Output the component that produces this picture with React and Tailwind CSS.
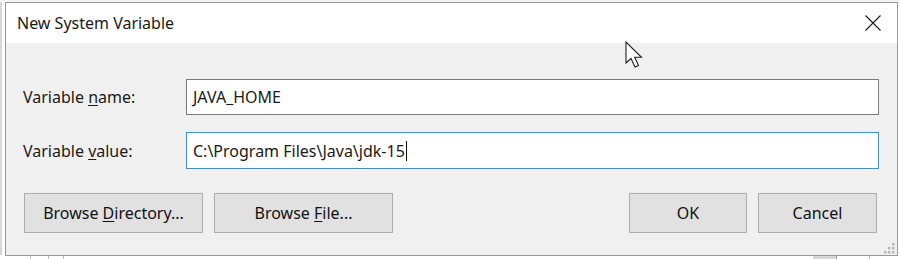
import React from "react";

function CloseX() {
  return (
    <svg width="16" height="16" viewBox="0 0 16 16" className="block">
      <path d="M0.5 0.5 L15.5 15.5 M15.5 0.5 L0.5 15.5" stroke="#1a1a1a" strokeWidth="1.1" fill="none" />
    </svg>
  );
}

function Cursor() {
  return (
    <svg width="20" height="28" viewBox="0 0 20 28" className="block">
      <path
        d="M1 1 L1 22 L6 17.5 L10 26 L13.5 24.5 L9.7 16.3 L16.5 16.3 Z"
        fill="#ffffff"
        stroke="#222"
        strokeWidth="1.1"
        strokeLinejoin="miter"
      />
    </svg>
  );
}

function Grip() {
  const dots = [
    [8, 0],
    [4, 4],
    [8, 4],
    [0, 8],
    [4, 8],
    [8, 8],
  ];
  return (
    <svg width="11" height="11" viewBox="0 0 11 11" className="block">
      {dots.map(([x, y], i) => (
        <rect key={i} x={x} y={y} width="2.5" height="2.5" fill="#b8b8b8" />
      ))}
    </svg>
  );
}

function Btn({ children, w }) {
  return (
    <div
      className={`${w} h-[40px] flex items-center justify-center bg-[#e1e1e1] border border-[#adadad] text-[#111] text-[16px]`}
    >
      {children}
    </div>
  );
}

export default function App() {
  return (
    <div
      className="w-[900px] h-[259px] bg-white relative overflow-hidden"
      style={{ fontFamily: '"Noto Sans", "Open Sans", sans-serif' }}
    >
      <div className="h-[2px] bg-[#f4f4f4]" />
      <div className="flex">
        <div className="w-[5px] relative">
          <div className="absolute left-[0px] top-[0px] w-[2px] h-[253px] bg-[#d8d8d8]" />
        </div>
        <div className="w-[893px] h-[254px] border border-[#9a9a9a] flex flex-col">
          <div className="h-[40px] bg-white flex items-center justify-between pl-[11px] pr-[16px]">
            <span className="text-[16px] text-[#1a1a1a] leading-none">New System Variable</span>
            <CloseX />
          </div>
          <div className="flex-1 bg-[#f0f0f0] flex flex-col pt-[36px] relative">
            <div className="flex items-center h-[36px]">
              <div className="w-[180px] pl-[17px] text-[16px] text-[#1a1a1a]">
                Variable <u className="underline-offset-2">n</u>ame:
              </div>
              <div className="w-[693px] h-[36px] border border-[#7a7a7a] bg-white flex items-center pl-[6px] text-[16px] text-[#1a1a1a]">
                JAVA_HOME
              </div>
            </div>
            <div className="flex items-center h-[37px] mt-[17px]">
              <div className="w-[180px] pl-[17px] text-[16px] text-[#1a1a1a]">
                Variable <u className="underline-offset-2">v</u>alue:
              </div>
              <div className="w-[693px] h-[37px] border border-[#4a8fc4] bg-white flex items-center pl-[6px] text-[16px] text-[#1a1a1a]">
                <span>C:\Program Files\Java\jdk-15</span>
                <span className="w-[1px] h-[20px] bg-[#111] ml-[1px]" />
              </div>
            </div>
            <div className="flex mt-[24px] pl-[18px] pr-[20px]">
              <Btn w="w-[179px]">
                <span>
                  Browse <u className="underline-offset-2">D</u>irectory...
                </span>
              </Btn>
              <div className="w-[11px]" />
              <Btn w="w-[179px]">
                <span>
                  Browse <u className="underline-offset-2">F</u>ile...
                </span>
              </Btn>
              <div className="flex-1" />
              <Btn w="w-[118px]">OK</Btn>
              <div className="w-[11px]" />
              <Btn w="w-[119px]">Cancel</Btn>
            </div>
            <div className="absolute right-[2px] bottom-[1px]">
              <Grip />
            </div>
          </div>
        </div>
      </div>
      <div className="flex h-[3px]">
        <div className="w-[30px]" />
        <div className="w-[1px] bg-[#bdbdbd]" />
        <div className="w-[17px]" />
        <div className="w-[1px] bg-[#bdbdbd]" />
        <div className="w-[14px]" />
        <div className="w-[1px] bg-[#bdbdbd]" />
        <div className="w-[749px]" />
        <div className="w-[23px] bg-[#d6d6d6]" />
        <div className="w-[1px] bg-[#9a9a9a]" />
        <div className="w-[32px]" />
        <div className="w-[1px] bg-[#bdbdbd]" />
      </div>
      <div className="absolute left-[625px] top-[41px]">
        <Cursor />
      </div>
    </div>
  );
}
